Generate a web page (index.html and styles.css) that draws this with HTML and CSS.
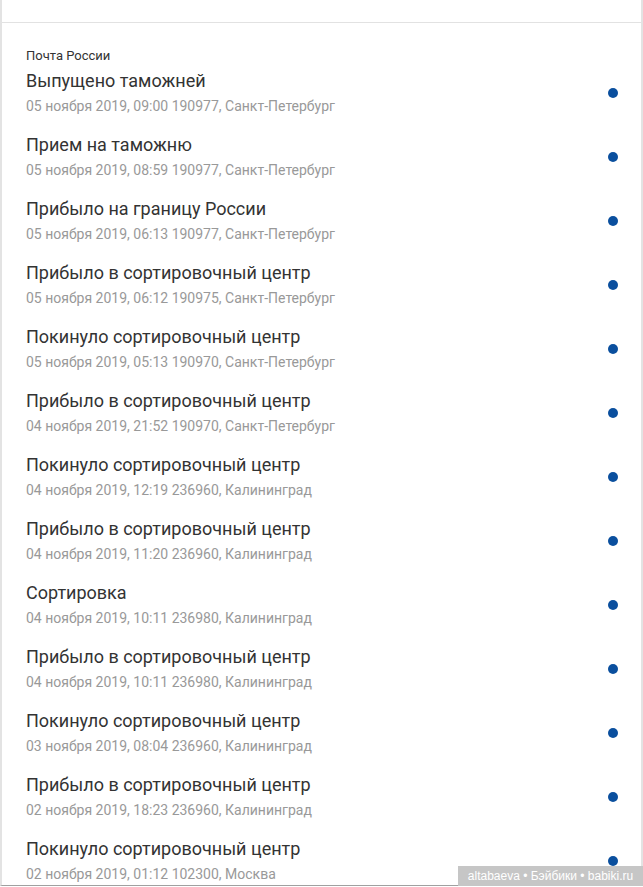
FILE: index.html
```html
<!DOCTYPE html>
<html lang="ru">
  <head>
    <meta charset="UTF-8" />
    <meta name="viewport" content="width=device-width, initial-scale=1.0" />
    <title>Отслеживание отправления</title>
    <link rel="stylesheet" href="styles.css">
  </head>
  <body>
    <div class="frame">
      <div class="top"></div>
      <div class="history">
        <div class="carrier">Почта России</div>
        <div class="event">
          <div class="text">
            <div class="title">Выпущено таможней</div>
            <div class="meta">05 ноября 2019, 09:00 190977, Санкт-Петербург</div>
          </div>
          <span class="dot"></span>
        </div>
        <div class="event">
          <div class="text">
            <div class="title">Прием на таможню</div>
            <div class="meta">05 ноября 2019, 08:59 190977, Санкт-Петербург</div>
          </div>
          <span class="dot"></span>
        </div>
        <div class="event">
          <div class="text">
            <div class="title">Прибыло на границу России</div>
            <div class="meta">05 ноября 2019, 06:13 190977, Санкт-Петербург</div>
          </div>
          <span class="dot"></span>
        </div>
        <div class="event">
          <div class="text">
            <div class="title">Прибыло в сортировочный центр</div>
            <div class="meta">05 ноября 2019, 06:12 190975, Санкт-Петербург</div>
          </div>
          <span class="dot"></span>
        </div>
        <div class="event">
          <div class="text">
            <div class="title">Покинуло сортировочный центр</div>
            <div class="meta">05 ноября 2019, 05:13 190970, Санкт-Петербург</div>
          </div>
          <span class="dot"></span>
        </div>
        <div class="event">
          <div class="text">
            <div class="title">Прибыло в сортировочный центр</div>
            <div class="meta">04 ноября 2019, 21:52 190970, Санкт-Петербург</div>
          </div>
          <span class="dot"></span>
        </div>
        <div class="event">
          <div class="text">
            <div class="title">Покинуло сортировочный центр</div>
            <div class="meta">04 ноября 2019, 12:19 236960, Калининград</div>
          </div>
          <span class="dot"></span>
        </div>
        <div class="event">
          <div class="text">
            <div class="title">Прибыло в сортировочный центр</div>
            <div class="meta">04 ноября 2019, 11:20 236960, Калининград</div>
          </div>
          <span class="dot"></span>
        </div>
        <div class="event">
          <div class="text">
            <div class="title">Сортировка</div>
            <div class="meta">04 ноября 2019, 10:11 236980, Калининград</div>
          </div>
          <span class="dot"></span>
        </div>
        <div class="event">
          <div class="text">
            <div class="title">Прибыло в сортировочный центр</div>
            <div class="meta">04 ноября 2019, 10:11 236980, Калининград</div>
          </div>
          <span class="dot"></span>
        </div>
        <div class="event">
          <div class="text">
            <div class="title">Покинуло сортировочный центр</div>
            <div class="meta">03 ноября 2019, 08:04 236960, Калининград</div>
          </div>
          <span class="dot"></span>
        </div>
        <div class="event">
          <div class="text">
            <div class="title">Прибыло в сортировочный центр</div>
            <div class="meta">02 ноября 2019, 18:23 236960, Калининград</div>
          </div>
          <span class="dot"></span>
        </div>
        <div class="event">
          <div class="text">
            <div class="title">Покинуло сортировочный центр</div>
            <div class="meta">02 ноября 2019, 01:12 102300, Москва</div>
          </div>
          <span class="dot"></span>
        </div>
      </div>
    </div>
    <div class="watermark">altabaeva • Бэйбики • babiki.ru</div>
  </body>
</html>
```
FILE: styles.css
```css
html,
body {
  margin: 0;
  height: 887px;
  overflow: hidden;
}
body {
  font-family: Roboto, "Noto Sans", Arial, sans-serif;
  background: #fff;
  position: relative;
}
.frame {
  box-sizing: border-box;
  width: 643px;
  height: 886px;
  border-left: 2px solid #e3e3e3;
  border-right: 2px solid #e3e3e3;
  border-bottom: 1px solid #a0a0a0;
  overflow: hidden;
}
.top {
  height: 22px;
  border-bottom: 1px solid #e2e2e2;
}
.history {
  padding: 24px 23px 0 24px;
}
.carrier {
  font-size: 13px;
  line-height: 18px;
  color: #333;
  margin-bottom: 4px;
}
.event {
  display: flex;
  align-items: center;
  justify-content: space-between;
  padding-bottom: 17px;
}
.title {
  font-size: 18px;
  line-height: 24px;
  color: #333;
}
.meta {
  margin-top: 3px;
  font-size: 14px;
  line-height: 20px;
  color: #999;
}
.dot {
  width: 10px;
  height: 10px;
  margin-top: 1px;
  border-radius: 50%;
  background: #0a4f9e;
}
.watermark {
  position: absolute;
  right: 0;
  bottom: 1px;
  width: 185px;
  height: 20px;
  background: #c6c6c6;
  color: #fff;
  font-family: "Liberation Sans", Arial, sans-serif;
  font-size: 12px;
  line-height: 20px;
  text-align: center;
}
```
